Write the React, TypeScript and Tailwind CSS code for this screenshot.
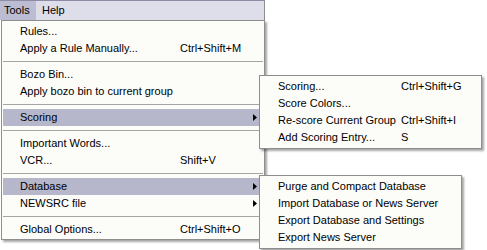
import clsx from 'clsx'

type Item = { label: string; shortcut?: string; arrow?: boolean; active?: boolean } | 'sep'

const mainItems: Item[] = [
  { label: 'Rules...' },
  { label: 'Apply a Rule Manually...', shortcut: 'Ctrl+Shift+M' },
  'sep',
  { label: 'Bozo Bin...' },
  { label: 'Apply bozo bin to current group' },
  'sep',
  { label: 'Scoring', arrow: true, active: true },
  'sep',
  { label: 'Important Words...' },
  { label: 'VCR...', shortcut: 'Shift+V' },
  'sep',
  { label: 'Database', arrow: true, active: true },
  { label: 'NEWSRC file', arrow: true },
  'sep',
  { label: 'Global Options...', shortcut: 'Ctrl+Shift+O' },
]

const scoringItems = [
  { label: 'Scoring...', shortcut: 'Ctrl+Shift+G' },
  { label: 'Score Colors...' },
  { label: 'Re-score Current Group', shortcut: 'Ctrl+Shift+I' },
  { label: 'Add Scoring Entry...', shortcut: 'S' },
]

const databaseItems = [
  'Purge and Compact Database',
  'Import Database or News Server',
  'Export Database and Settings',
  'Export News Server',
]

const Arrow = () => (
  <svg width="4" height="7" viewBox="0 0 4 7" className="ml-auto mr-[6px]">
    <path d="M0 0 L4 3.5 L0 7 Z" fill="#000" />
  </svg>
)

const App = () => {
  return (
    <div
      className="relative h-[250px] w-[487px] overflow-hidden bg-white text-[11px] text-black"
      style={{ fontFamily: '"Liberation Sans", Arial, sans-serif' }}
    >
      {/* menu bar */}
      <div className="flex h-[20px] w-[265px] border-t border-r border-[#8c8ca6] border-r-[#8e8e8e] bg-[#dedeea]">
        <div className="flex h-[19px] w-[36px] items-center bg-[#bcbcd2] pl-[4px]">Tools</div>
        <div className="flex h-[19px] items-center pl-[6px]">Help</div>
      </div>

      {/* main dropdown */}
      <div className="ml-px w-[264px] border border-[#8e8e8e] bg-[#fcfcf9] pt-[2px] pb-px shadow-[2px_2px_2px_rgba(0,0,0,0.35)]">
        {mainItems.map((item, i) =>
          item === 'sep' ? (
            <div key={i} className="flex h-[9px] items-center px-px">
              <div className="h-px w-full bg-[#a5a5a5]" />
            </div>
          ) : (
            <div
              key={i}
              className={clsx(
                'mx-px flex h-[17px] items-center pl-[17px]',
                item.active && 'bg-[#b7b7cc]',
              )}
            >
              <span className="w-[160px] whitespace-nowrap">{item.label}</span>
              {item.shortcut && <span className="whitespace-nowrap">{item.shortcut}</span>}
              {item.arrow && <Arrow />}
            </div>
          ),
        )}
      </div>

      {/* scoring submenu */}
      <div className="absolute left-[259px] top-[75px] w-[223px] border border-[#8e8e8e] bg-[#fcfcf9] py-[2px] shadow-[2px_2px_2px_rgba(0,0,0,0.35)]">
        {scoringItems.map((item) => (
          <div key={item.label} className="mx-px flex h-[17px] items-center pl-[17px]">
            <span className="w-[123px] whitespace-nowrap">{item.label}</span>
            {item.shortcut && <span className="whitespace-nowrap">{item.shortcut}</span>}
          </div>
        ))}
      </div>

      {/* database submenu */}
      <div className="absolute left-[259px] top-[175px] w-[203px] border border-[#8e8e8e] bg-[#fcfcf9] py-[2px] shadow-[2px_2px_2px_rgba(0,0,0,0.35)]">
        {databaseItems.map((label) => (
          <div key={label} className="mx-px flex h-[17px] items-center whitespace-nowrap pl-[17px]">
            {label}
          </div>
        ))}
      </div>
    </div>
  )
}

export default App
